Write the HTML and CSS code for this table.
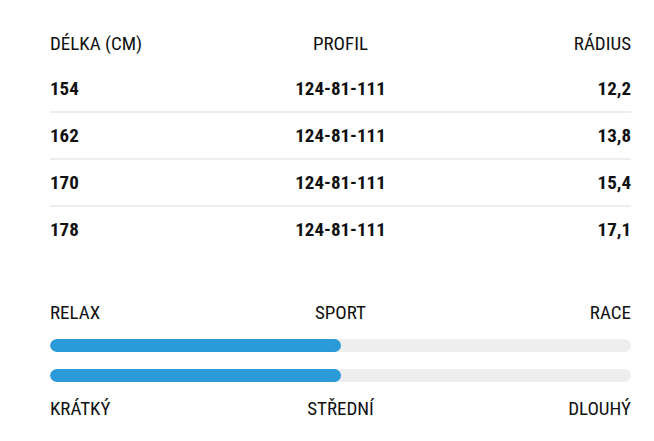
FILE: index.html
```html
<!DOCTYPE html>
<html lang="cs">
<head>
<meta charset="utf-8">
<link rel="stylesheet" href="styles.css">
</head>
<body>
<div class="wrap">
  <div class="table">
    <div class="row head">
      <span class="c1">DÉLKA (CM)</span><span class="c2">PROFIL</span><span class="c3">RÁDIUS</span>
    </div>
    <div class="row data">
      <span class="c1">154</span><span class="c2">124-81-111</span><span class="c3">12,2</span>
    </div>
    <div class="row data">
      <span class="c1">162</span><span class="c2">124-81-111</span><span class="c3">13,8</span>
    </div>
    <div class="row data">
      <span class="c1">170</span><span class="c2">124-81-111</span><span class="c3">15,4</span>
    </div>
    <div class="row data last">
      <span class="c1">178</span><span class="c2">124-81-111</span><span class="c3">17,1</span>
    </div>
  </div>
  <div class="scales">
    <div class="labels"><span class="c1">RELAX</span><span class="c2">SPORT</span><span class="c3">RACE</span></div>
    <div class="track first"><div class="fill" style="width:50%"></div></div>
    <div class="track second"><div class="fill" style="width:50%"></div></div>
    <div class="labels bottom"><span class="c1">KRÁTKÝ</span><span class="c2">STŘEDNÍ</span><span class="c3">DLOUHÝ</span></div>
  </div>
</div>
</body>
</html>
```
FILE: styles.css
```css
html, body { margin: 0; padding: 0; background: #fff; }
body {
  font-family: "Roboto Condensed", "Liberation Sans Narrow", "DejaVu Sans Condensed", Roboto, sans-serif;
  color: #111;
  font-size: 19px;
  line-height: 22px;
}
.wrap { padding: 29px 23px 0 50px; }
.row {
  display: grid;
  grid-template-columns: 1fr 1fr 1fr;
  align-items: center;
}
.c1 { text-align: left; }
.c2 { text-align: center; }
.c3 { text-align: right; }
.head { height: 30px; margin-bottom: 7px; }
.data { font-weight: 700; height: 45px; border-bottom: 2px solid #eeeeee; }
.data.last { border-bottom: none; }
.scales { margin-top: 50px; }
.labels { display: grid; grid-template-columns: 1fr 1fr 1fr; height: 22px; }
.track { height: 13px; background: #eeeeee; border-radius: 7px; overflow: hidden; }
.track.first { margin-top: 15px; }
.track.second { margin-top: 17px; }
.labels.bottom { margin-top: 16px; }
.fill { height: 100%; background: #2b9ad9; border-radius: 7px; }
```
